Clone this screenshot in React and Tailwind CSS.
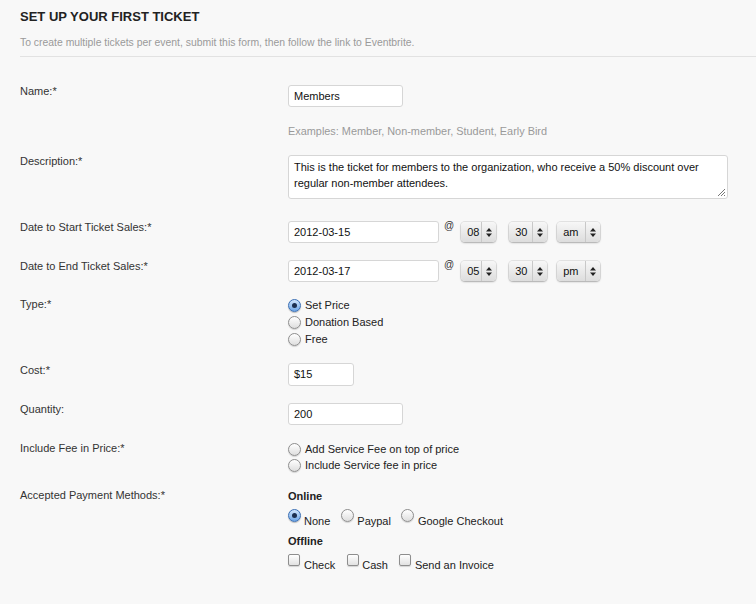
import React from 'react';

// Native-looking radio and checkbox drawn with spans, so they match the old
// Mac form look of the screenshot.
function Radio({ checked }) {
  if (checked) {
    return (
      <span className="inline-flex h-[13px] w-[13px] shrink-0 items-center justify-center rounded-full border border-[#3a6fb5] bg-gradient-to-b from-[#cfe4fb] to-[#6fa7e6] shadow-[0_1px_1px_rgba(0,0,0,0.25)]">
        <span className="h-[5px] w-[5px] rounded-full bg-[#1b2f4f]"></span>
      </span>
    );
  }
  return (
    <span className="inline-block h-[13px] w-[13px] shrink-0 rounded-full border border-[#8e8e8e] bg-gradient-to-b from-[#ffffff] to-[#dedede] shadow-[0_1px_1px_rgba(0,0,0,0.15)]"></span>
  );
}

function Checkbox() {
  return (
    <span className="inline-block h-[12px] w-[12px] shrink-0 rounded-[2px] border border-[#8e8e8e] bg-gradient-to-b from-[#ffffff] to-[#e2e2e2] shadow-[0_1px_1px_rgba(0,0,0,0.15)]"></span>
  );
}

function Select({ value, width }) {
  return (
    <div
      className={`flex h-[20px] items-center rounded-[4px] bg-gradient-to-b from-[#f7f7f7] to-[#dddddd] shadow-[0_0_0_1px_rgba(0,0,0,0.08),0_1px_2px_rgba(0,0,0,0.25)] ${width}`}
    >
      <span className="flex-1 pl-[6px] text-[11px] text-[#111]">{value}</span>
      <span className="flex h-full w-[15px] items-center justify-center border-l border-[#c8c8c8]">
        <svg width="6" height="9" viewBox="0 0 6 9">
          <path d="M3 0 L6 3.5 H0 Z" fill="#222" />
          <path d="M3 9 L6 5.5 H0 Z" fill="#222" />
        </svg>
      </span>
    </div>
  );
}

function TextInput({ value, width, height = 'h-[22px]' }) {
  return (
    <div
      className={`flex items-center rounded-[3px] border border-[#d6d6d6] bg-white pl-[5px] text-[11px] text-[#111] ${width} ${height}`}
    >
      {value}
    </div>
  );
}

function Row({ label, className = '', children }) {
  return (
    <div className={`flex items-start ${className}`}>
      <div className="w-[268px] shrink-0 text-[11px] leading-[14px] text-[#333]">{label}</div>
      <div className="flex-1">{children}</div>
    </div>
  );
}

function TimeGroup({ date, hour, minute, ampm }) {
  return (
    <div className="flex items-start">
      <TextInput value={date} width="w-[151px]" />
      <span className="ml-[5px] mt-[-1px] text-[10px] leading-[12px] text-[#333]">@</span>
      <div className="ml-[7px] mt-[1px] flex">
        <Select value={hour} width="w-[35px]" />
        <div className="ml-[13px]">
          <Select value={minute} width="w-[38px]" />
        </div>
        <div className="ml-[10px]">
          <Select value={ampm} width="w-[43px]" />
        </div>
      </div>
    </div>
  );
}

export default function App() {
  return (
    <div className="h-[604px] w-[756px] overflow-hidden bg-[#f8f8f8] pl-[20px] pt-[9px] font-['Liberation_Sans',Arial,sans-serif]">
      <div className="border-b border-[#e2e2e2] pb-[6px]">
        <h1 className="text-[13px] font-bold leading-[16px] text-[#222]">SET UP YOUR FIRST TICKET</h1>
        <p className="mt-[11px] text-[10.4px] leading-[14px] text-[#9a9a9a]">
          To create multiple tickets per event, submit this form, then follow the link to Eventbrite.
        </p>
      </div>

      <Row label="Name:*" className="mt-[27px]">
        <div className="mt-[1px]">
          <TextInput value="Members" width="w-[115px]" />
        </div>
        <p className="mt-[17px] text-[10.9px] leading-[14px] text-[#9a9a9a]">
          Examples: Member, Non-member, Student, Early Bird
        </p>
      </Row>

      <Row label="Description:*" className="mt-[16px]">
        <div className="relative mt-[1px] h-[44px] w-[440px] rounded-[3px] border border-[#d6d6d6] bg-white px-[5px] pt-[3px] text-[11px] leading-[16px] text-[#111]">
          This is the ticket for members to the organization, who receive a 50% discount over regular non-member attendees.
          <svg className="absolute bottom-[2px] right-[2px]" width="7" height="7" viewBox="0 0 7 7">
            <path d="M7 0 L0 7 M7 3 L3 7 M7 6 L6 7" stroke="#777" strokeWidth="1" />
          </svg>
        </div>
      </Row>

      <Row label="Date to Start Ticket Sales:*" className="mt-[21px]">
        <div className="mt-[1px]">
          <TimeGroup date="2012-03-15" hour="08" minute="30" ampm="am" />
        </div>
      </Row>

      <Row label="Date to End Ticket Sales:*" className="mt-[16px]">
        <div className="mt-[1px]">
          <TimeGroup date="2012-03-17" hour="05" minute="30" ampm="pm" />
        </div>
      </Row>

      <Row label="Type:*" className="mt-[15px]">
        <div className="text-[11px] leading-[17px] text-[#222]">
          <div className="flex items-center gap-[4px]"><Radio checked />Set Price</div>
          <div className="flex items-center gap-[4px]"><Radio />Donation Based</div>
          <div className="flex items-center gap-[4px]"><Radio />Free</div>
        </div>
      </Row>

      <Row label="Cost:*" className="mt-[15px]">
        <TextInput value="$15" width="w-[66px]" height="h-[23px]" />
      </Row>

      <Row label="Quantity:" className="mt-[16px]">
        <div className="mt-[1px]">
          <TextInput value="200" width="w-[115px]" />
        </div>
      </Row>

      <Row label="Include Fee in Price:*" className="mt-[16px]">
        <div className="text-[11px] leading-[16px] text-[#222]">
          <div className="flex items-center gap-[4px]"><Radio />Add Service Fee on top of price</div>
          <div className="flex items-center gap-[4px]"><Radio />Include Service fee in price</div>
        </div>
      </Row>

      <Row label="Accepted Payment Methods:*" className="mt-[15px]">
        <div className="text-[11px] text-[#222]">
          <div className="mt-[1px] font-bold leading-[14px]">Online</div>
          <div className="mt-[6px] flex items-start leading-[14px]">
            <Radio checked />
            <span className="ml-[3px] mt-[5px]">None</span>
            <span className="ml-[11px]"><Radio /></span>
            <span className="ml-[3px] mt-[5px]">Paypal</span>
            <span className="ml-[10px]"><Radio /></span>
            <span className="ml-[4px] mt-[5px]">Google Checkout</span>
          </div>
          <div className="mt-[6px] font-bold leading-[14px]">Offline</div>
          <div className="mt-[6px] flex items-start leading-[14px]">
            <Checkbox />
            <span className="ml-[4px] mt-[4px]">Check</span>
            <span className="ml-[12px]"><Checkbox /></span>
            <span className="ml-[3px] mt-[4px]">Cash</span>
            <span className="ml-[11px]"><Checkbox /></span>
            <span className="ml-[4px] mt-[4px]">Send an Invoice</span>
          </div>
        </div>
      </Row>
    </div>
  );
}
